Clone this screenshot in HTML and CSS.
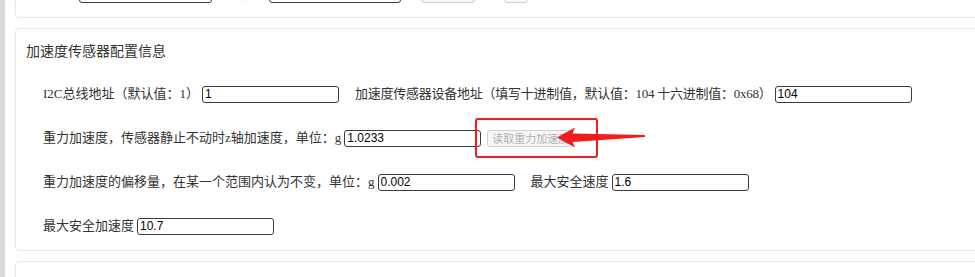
FILE: index.html
```html
<!DOCTYPE html>
<html lang="zh-CN">
<head>
    <meta charset="UTF-8">
    <meta name="viewport" content="width=device-width, initial-scale=1.0">
    <title>传感器配置</title>
    <link rel="stylesheet" href="styles.css">
</head>
<body>
    <div class="layout">
        <div class="sidebar"></div>
        <div class="main">
            <div class="card card-top">
                <div class="row row-short">
                    <span class="label">模式</span>
                    <input type="text" class="field field-a" value="">
                    <span class="label label-b">值</span>
                    <input type="text" class="field field-b" value="">
                    <button class="btn btn-wide" disabled>读取数据</button>
                    <button class="btn btn-small" disabled>写入</button>
                </div>
            </div>

            <div class="card">
                <div class="card-title">加速度传感器配置信息</div>
                <div class="row">
                    <span class="label">I2C总线地址（默认值：1）</span>
                    <input type="text" class="field" value="1">
                    <span class="label label-gap label-tight">加速度传感器设备地址（填写十进制值，默认值：104 十六进制值：0x68）</span>
                    <input type="text" class="field" value="104">
                </div>
                <div class="row">
                    <span class="label">重力加速度，传感器静止不动时z轴加速度，单位：g</span>
                    <input type="text" class="field" value="1.0233">
                    <button class="btn btn-read" disabled>读取重力加速度</button>
                </div>
                <div class="row">
                    <span class="label">重力加速度的偏移量，在某一个范围内认为不变，单位：g</span>
                    <input type="text" class="field" value="0.002">
                    <span class="label label-gap">最大安全速度</span>
                    <input type="text" class="field" value="1.6">
                </div>
                <div class="row">
                    <span class="label">最大安全加速度</span>
                    <input type="text" class="field" value="10.7">
                </div>
            </div>

            <div class="card">
                <div class="card-title">电机驱动配置信息</div>
            </div>
        </div>
    </div>

    <!-- 标注：红框和箭头 -->
    <svg class="annotation" width="975" height="277" viewBox="0 0 975 277">
        <rect x="476" y="119" width="121" height="38" rx="2" fill="none" stroke="#f21c1c" stroke-width="2"/>
        <polygon points="557,137.5 575,127.5 572.5,133.5 645,135 645,137 572.5,142 575,147.5" fill="#f21c1c"/>
    </svg>
</body>
</html>
```

FILE: styles.css
```css
html, body {
    margin: 0;
    padding: 0;
    height: 100%;
    overflow: hidden;
}
body {
    position: relative;
    background-color: #fff;
    color: #333;
    font-family: "Liberation Serif", "Noto Sans CJK SC", serif;
    font-size: 13px;
}
.layout {
    display: flex;
    height: 100%;
}
.sidebar {
    width: 5px;
    flex-shrink: 0;
    background-color: #dcdcdc;
}
.main {
    flex: 1;
    padding-left: 10px;
    margin-top: -35px;
    margin-right: -30px;
}
.card {
    border: 1px solid #e8e8e8;
    border-radius: 4px;
    padding: 9px 10px 2px 10px;
    margin-bottom: 10px;
}
.card-top {
    padding-bottom: 4px;
}
.card-title {
    font-family: "Noto Sans CJK SC", sans-serif;
    font-size: 14px;
    line-height: 24px;
    height: 24px;
    margin-bottom: 10px;
    color: #333;
}
.row {
    display: flex;
    align-items: center;
    height: 44px;
    padding-left: 17px;
    white-space: nowrap;
}
.row-short {
    height: 38px;
}
.label {
    line-height: 18px;
}
.label-gap {
    margin-left: 16px;
}
.label-tight {
    letter-spacing: -0.25px;
}
.label-b {
    margin-left: 28px;
}
.field {
    box-sizing: border-box;
    width: 137px;
    height: 17px;
    margin-left: 3px;
    padding: 0 2px;
    border: 1px solid #3c3c3c;
    border-radius: 3px;
    font-family: "Liberation Sans", Arial, sans-serif;
    font-size: 12px;
    color: #000;
    background-color: #fff;
    outline: none;
}
.field-a {
    width: 133px;
    margin-left: 10px;
}
.field-b {
    width: 132px;
    margin-left: 16px;
}
.btn {
    box-sizing: border-box;
    height: 17px;
    margin-left: 20px;
    padding: 0 4px;
    border: 1px solid #d0d0d0;
    border-radius: 3px;
    background-color: #f7f7f7;
    color: #b0b0b0;
    font-family: "Noto Sans CJK SC", sans-serif;
    font-size: 11px;
    line-height: 15px;
}
.btn-wide {
    width: 54px;
}
.btn-small {
    width: 24px;
    margin-left: 29px;
    padding: 0 1px;
    overflow: hidden;
}
.btn-read {
    width: 86px;
    margin-left: 6px;
    text-align: left;
    overflow: hidden;
}
.annotation {
    position: absolute;
    top: 0;
    left: 0;
    pointer-events: none;
}
```
